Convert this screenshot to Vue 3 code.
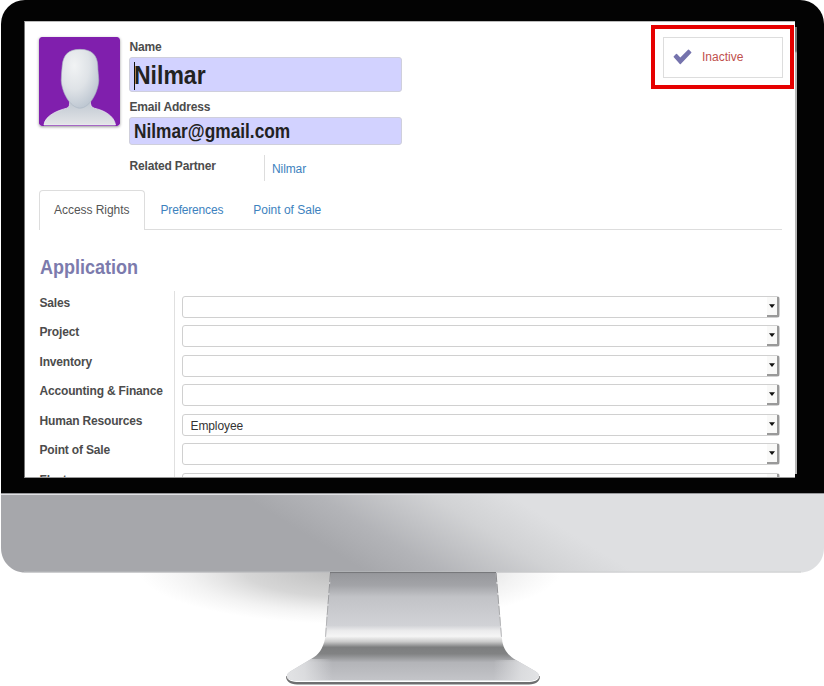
<script setup>
const tabs = ['Access Rights', 'Preferences', 'Point of Sale']
const fields = [
  { label: 'Sales', value: '' },
  { label: 'Project', value: '' },
  { label: 'Inventory', value: '' },
  { label: 'Accounting & Finance', value: '' },
  { label: 'Human Resources', value: 'Employee' },
  { label: 'Point of Sale', value: '' },
  { label: 'Fleet', value: '' }
]
</script>

<template>
  <div class="monitor">
    <div class="bezel">
      <main class="screen">
        <div class="page">
          <header class="header">
            <svg class="avatar" viewBox="0 0 82 90" width="81" height="89" preserveAspectRatio="none">
              <defs>
                <radialGradient id="head" cx="0.35" cy="0.28" r="0.8">
                  <stop offset="0" stop-color="#f1f3f4" />
                  <stop offset="0.5" stop-color="#dfe3e7" />
                  <stop offset="1" stop-color="#b8c2ce" />
                </radialGradient>
                <linearGradient id="body" x1="0" y1="0" x2="0" y2="1">
                  <stop offset="0" stop-color="#c0c8d1" />
                  <stop offset="1" stop-color="#e3e5e8" />
                </linearGradient>
              </defs>
              <rect width="82" height="90" rx="2.500" fill="#801fad" />
              <path d="M5 89C6 79 20 74 28 72C31 71 31 69 31 65H52C52 69 53 71 56 72C65 74 76 79 77.500 89Z" fill="url(#body)" stroke="#eef0f3" stroke-width=".7" />
              <path d="M41.500 12.500C54 12.500 59 19 59.500 29C59.500 34 60.500 40 60.500 44C60 55 52 71.500 41.500 72C31 71.500 23 55 22.500 44C22.500 39 23 34 23.500 29C24.500 18 30 12.500 41.500 12.500Z" fill="url(#head)" stroke="#a9b4c1" stroke-width=".6" />
            </svg>
            <div class="identity">
              <label class="name-label">Name</label>
              <div class="input name-input"><i class="caret"></i><span>Nilmar</span></div>
              <label class="mail-label">Email Address</label>
              <div class="input mail-input"><span>Nilmar@gmail.com</span></div>
              <div class="partner">
                <label>Related Partner</label>
                <a>Nilmar</a>
              </div>
            </div>
            <div class="highlight">
              <button class="status">
                <svg width="19" height="16" viewBox="0 0 19 16">
                  <path d="M0.800 7.300L3 5.100Q3.500 4.600 4 5.100L7.300 8.400L15 0.700Q15.500 .2 16 .7L18.200 2.900Q18.700 3.400 18.200 3.900L7.800 14.900Q7.300 15.400 6.800 14.900L0.800 8.300Q.3 7.800 .8 7.300Z" fill="#7573ad" />
                </svg>
                <span>Inactive</span>
              </button>
            </div>
          </header>

          <nav class="tabs">
            <a v-for="(tab, i) in tabs" :key="tab" class="tab" :class="{ active: i === 0 }">{{ tab }}</a>
          </nav>

          <h2><span>Application</span></h2>
          <section class="form">
            <div v-for="field in fields" :key="field.label" class="row">
              <label>{{ field.label }}</label>
              <div class="cell">
                <div class="select">
                  <span>{{ field.value }}</span>
                  <b class="drop">
                    <svg width="6" height="4" viewBox="0 0 6 4"><path d="M0 .3H6L3 4Z" fill="#111" /></svg>
                  </b>
                </div>
              </div>
            </div>
          </section>
        </div>
        <div class="scrollbar"></div>
      </main>
    </div>

    <svg class="base" width="824" height="194" viewBox="0 492 824 194">
      <defs>
        <linearGradient id="chin" gradientUnits="userSpaceOnUse" x1="238" y1="493" x2="312" y2="373">
          <stop offset="0" stop-color="#a6a7ab" />
          <stop offset=".28" stop-color="#b3b4b8" />
          <stop offset=".7" stop-color="#d1d2d4" />
          <stop offset="1" stop-color="#dedfe1" />
        </linearGradient>
        <radialGradient id="shadow">
          <stop offset="0" stop-color="#777" stop-opacity=".5" />
          <stop offset=".5" stop-color="#808080" stop-opacity=".32" />
          <stop offset=".78" stop-color="#999" stop-opacity=".12" />
          <stop offset="1" stop-color="#aaa" stop-opacity="0" />
        </radialGradient>
        <linearGradient id="stand" gradientUnits="userSpaceOnUse" x1="0" y1="572" x2="0" y2="681">
          <stop offset="0" stop-color="#818286" />
          <stop offset=".015" stop-color="#97989c" />
          <stop offset=".12" stop-color="#a2a3a7" />
          <stop offset=".23" stop-color="#c2c3c7" />
          <stop offset=".49" stop-color="#d1d2d6" />
          <stop offset=".54" stop-color="#ececed" />
          <stop offset=".59" stop-color="#f5f5f5" />
          <stop offset=".64" stop-color="#cacaca" />
          <stop offset=".69" stop-color="#7d7e7f" />
          <stop offset=".75" stop-color="#818283" />
          <stop offset=".83" stop-color="#b3b4b8" />
          <stop offset="1" stop-color="#c4c5c9" />
        </linearGradient>
        <linearGradient id="shine" x1="0" x2="1">
          <stop offset="0" stop-color="#e2e3e5" />
          <stop offset=".07" stop-color="#e2e3e5" stop-opacity=".8" />
          <stop offset=".18" stop-color="#e2e3e5" stop-opacity="0" />
          <stop offset=".82" stop-color="#e2e3e5" stop-opacity="0" />
          <stop offset=".93" stop-color="#e2e3e5" stop-opacity=".8" />
          <stop offset="1" stop-color="#e2e3e5" />
        </linearGradient>
        <linearGradient id="edge" x1="0" x2="0" y1="0" y2="1">
          <stop offset="0" stop-color="#737477" />
          <stop offset="1" stop-color="#b7b8ba" />
        </linearGradient>
      </defs>
      <ellipse cx="350" cy="570" rx="212" ry="54" fill="url(#shadow)" />
      <path d="M1 492H824V548C824 562 813 572.500 800 572.500H25C12 572.500 1 562 1 548Z" fill="url(#chin)" />
      <path d="M1 492.500H824" stroke="#030303" />
      <path d="M1 493.500H824" stroke="#97989b" />
      <path d="M1 494.500H824" stroke="#e0e0e3" />
      <path d="M24 572.100H801" stroke="#c8c9cc" stroke-width=".8" />
      <path d="M286 676C286 683 292 684.500 300 684.500H526C534 684.500 540 683 540 676Z" fill="#6e6f70" />
      <path d="M286.500 675C287 681 292 682 299 682H527C534 682 539 681 539.500 675Z" fill="#fff" />
      <path d="M330 572.500H496L502 639C503 650 509 656 516 660L535 671C542 675 539 680 530 680.500H296C286 680 284 675 291 671L311 659C319 655 323 648 325 639Z" fill="url(#stand)" />
      <path d="M311 659L291 671C284 675 286 680 296 680.500H530C539 680 542 675 535 671L516 660Z" fill="url(#shine)" />
      <path d="M330 572.500H496" stroke="#77787b" />
      <path d="M330.500 573L325.500 637M496 573L501.500 637" stroke="#d8d8da" stroke-width="1" />
      <path d="M330.500 573L325.500 637M496 573L501.500 637" stroke="url(#edge)" stroke-width=".8" stroke-dasharray="9 2" />
    </svg>
  </div>
</template>

<style>
body { margin: 0; background: #fff; }
</style>

<style scoped>
* { box-sizing: border-box; }
.monitor { width: 824px; height: 686px; overflow: hidden; font-family: "Liberation Sans", Arial, sans-serif; font-size: 12px; color: #4c4c4c; }
.bezel { height: 493px; margin-left: 1px; padding: 21px 26px 15px 23px; background: #030303; border-radius: 24px 24px 0 0; }
.base { display: block; margin-top: -1px; }
.screen { display: flex; height: 457px; overflow: hidden; }
.page { width: 771px; height: 457px; flex: none; padding: 0 0 0 14px; background: #fff; border-left: 1px solid #777; border-top: 1px solid #bbb; border-bottom: 1px solid #999; overflow: hidden; }
.scrollbar { width: 2px; height: 447px; margin-top: 6px; background: linear-gradient(#777 0 24px, #b5b5b5 26px); }
.header { display: flex; height: 168px; }
.avatar { flex: none; display: block; margin-top: 15px; border-radius: 3px; box-shadow: 0 1px 3px #999; }
.identity { width: 273px; margin-left: 9px; padding-top: 18px; }
label { display: block; padding-left: .5px; font-weight: bold; line-height: 14px; letter-spacing: -.17px; white-space: nowrap; }
.input { display: flex; align-items: center; width: 273px; border: 1px solid #cfcfdc; border-radius: 3px; background: #d2d2ff; color: #222; font-weight: bold; }
.input span { transform-origin: left; }
.name-input { height: 35px; margin-top: 3px; padding: 2px 0 0 4px; font-size: 25px; }
.name-input span { transform: scaleX(.92); }
.caret { width: 1px; height: 28px; margin-right: -1px; background: #111; }
.mail-label { margin-top: 8px; }
.mail-input { height: 28px; margin-top: 3px; padding-left: 4px; font-size: 19.500px; }
.mail-input span { transform: scaleX(.887); }
.partner { display: flex; justify-content: space-between; margin-top: 10px; }
.partner label { padding-top: 4px; }
.partner a { width: 138px; height: 26px; padding-left: 7px; border-left: 1px solid #ddd; line-height: 28px; letter-spacing: -.1px; color: #3d82be; }
.highlight { width: 143px; height: 64px; margin: 3px 1px 0 auto; padding: 7px; border: 4px solid #e60000; }
.status { display: flex; align-items: center; width: 120px; height: 41px; margin: 1px 0 0 1px; padding: 0 0 2px 9px; background: #fff; border: 1px solid #ddd; font: 12px "Liberation Sans", Arial, sans-serif; color: #c0504d; }
.status span { margin-left: 10px; letter-spacing: 0; }
.tabs { display: flex; width: 743px; height: 40px; border-bottom: 1px solid #ddd; line-height: 41px; }
.tab { padding: 0 14.500px 0 15.500px; color: #3d82be; letter-spacing: -.18px; }
.tab:last-child { letter-spacing: 0; }
.tab.active { width: 106px; height: 40px; padding: 0 0 0 14px; border: 1px solid #ddd; border-bottom: 0; border-radius: 4px 4px 0 0; line-height: 39px; letter-spacing: -.04px; color: #555; background: #fff; }
h2 { margin: 25px 0 0 .5px; font-size: 20px; line-height: 24px; color: #7c7bad; }
h2 span { display: inline-block; transform: scaleX(.901); transform-origin: left; }
.form { padding-top: 12px; }
.row { display: flex; height: 29.450px; }
.row label { width: 135px; padding-top: 5px; }
.cell { width: 606px; padding: 5px 0 0 7px; border-left: 1px solid #e0e0e0; }
.select { display: flex; justify-content: space-between; width: 598px; height: 22px; padding-left: 7.500px; border: 1px solid #d0d0d0; border-radius: 3px; background: #fff; line-height: 23px; letter-spacing: -.1px; color: #333; }
.drop { display: flex; align-items: center; justify-content: center; width: 12px; height: 20px; border-right: 2px solid #999; border-bottom: 2px solid #999; background: #f9f9f8; }
</style>
